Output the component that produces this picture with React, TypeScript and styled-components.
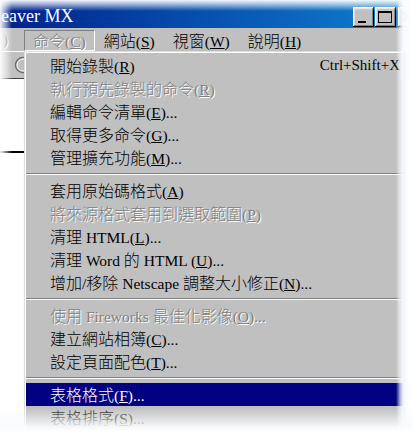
import React from "react";
import styled, { createGlobalStyle, css } from "styled-components";

const Global = createGlobalStyle`
  html, body { margin: 0; padding: 0; background: #ffffff; }
  body { font-family: "Noto Sans CJK TC", "Liberation Serif", serif; font-weight: 300; }
`;

const Stage = styled.div`
  position: relative;
  width: 412px;
  height: 432px;
  overflow: hidden;
  background: #ffffff;
`;

const Window = styled.div`
  position: relative;
  width: 422px;
  height: 432px;
  display: flex;
  flex-direction: column;
`;

const TitleBar = styled.div`
  flex: none;
  height: 28px;
  box-sizing: border-box;
  padding: 0 3px 0 1px;
  display: flex;
  align-items: flex-start;
  justify-content: space-between;
  background: linear-gradient(90deg, #00208c 0%, #1084d0 100%);
`;

const Title = styled.div`
  padding-top: 4px;
  line-height: 24px;
  font-family: "Liberation Serif", serif;
  font-weight: 400;
  font-size: 18px;
  color: #ffffff;
  white-space: nowrap;
`;

const Controls = styled.div`
  display: flex;
  margin-top: 7px;
  gap: 1px;
`;

const CtrlButton = styled.div<{ $gap?: boolean }>`
  width: 21px;
  height: 20px;
  background: #c0c0c0;
  margin-left: ${(p) => (p.$gap ? "1px" : "0")};
  box-shadow: inset -1px -1px #000000, inset 1px 1px #ffffff,
    inset -2px -2px #808080, inset 2px 2px #dfdfdf;
  svg { display: block; }
`;

const MenuBar = styled.div`
  flex: none;
  height: 24px;
  box-sizing: border-box;
  padding-top: 2px;
  display: flex;
  align-items: flex-start;
  background: #c0c0c0;
  border-bottom: 1px solid #ffffff;
`;

const MenuTail = styled.div`
  width: 24px;
  height: 21px;
  box-sizing: border-box;
  padding-left: 3px;
  display: flex;
  align-items: center;
  font-family: "Liberation Serif", serif;
  font-size: 15px;
  color: #808080;
  text-shadow: 1px 1px 0 #ffffff;
`;

const MenuBarItem = styled.div<{ $open?: boolean }>`
  height: 21px;
  box-sizing: border-box;
  padding: 0 8px;
  display: flex;
  align-items: center;
  font-size: 16px;
  line-height: 21px;
  color: #000000;
  white-space: nowrap;
  border: 1px solid transparent;
  ${(p) =>
    p.$open &&
    css`
      border-color: #808080 #ffffff #ffffff #808080;
      color: #808080;
      text-shadow: 1px 1px 0 #ffffff;
    `}
`;

const Toolbar = styled.div`
  flex: none;
  height: 27px;
  box-sizing: border-box;
  padding-left: 14px;
  display: flex;
  align-items: center;
  background: #c0c0c0;
  border-bottom: 1px solid #404040;
`;

const Document = styled.div`
  flex: 1;
  background: #ffffff;
  padding-top: 72px;
`;

const Rule = styled.div`
  width: 24px;
  height: 2px;
  background: #000000;
`;

const Dropdown = styled.div`
  position: absolute;
  left: 24px;
  top: 51px;
  width: 381px;
  box-sizing: border-box;
  padding: 2px 0 20px;
  background: #c0c0c0;
  border: 1px solid;
  border-color: #dfdfdf #000000 #000000 #dfdfdf;
  box-shadow: inset 1px 1px #ffffff, inset -1px -1px #808080,
    2px 2px 3px rgba(0, 0, 0, 0.35);
`;

type RowState = "normal" | "disabled" | "active";

const Row = styled.div<{ $state: RowState }>`
  height: 23px;
  box-sizing: border-box;
  margin: 0 1px;
  padding: 0 3px 0 24px;
  display: flex;
  align-items: center;
  justify-content: space-between;
  font-size: 16px;
  line-height: 23px;
  white-space: nowrap;
  color: #000000;
  ${(p) =>
    p.$state === "disabled" &&
    css`
      color: #808080;
      text-shadow: 1px 1px 0 #ffffff;
    `}
  ${(p) =>
    p.$state === "active" &&
    css`
      background: #000080;
      color: #ffffff;
    `}
`;

const Latin = styled.span`
  font-family: "Liberation Serif", serif;
  font-weight: 400;
  font-size: 15.5px;
`;

const Key = styled.span`
  text-decoration: underline;
  text-underline-offset: 1px;
`;

const Shortcut = styled.span`
  font-family: "Liberation Serif", serif;
  font-weight: 400;
  font-size: 15px;
`;

const Separator = styled.div`
  height: 10px;
  box-sizing: border-box;
  margin: 0 1px;
  padding-top: 4px;
  &::before {
    content: "";
    display: block;
    border-top: 1px solid #808080;
    border-bottom: 1px solid #ffffff;
  }
`;

type Edge = "top" | "left" | "right" | "bottom";

const Fade = styled.div<{ $edge: Edge }>`
  position: absolute;
  pointer-events: none;
  ${(p) =>
    p.$edge === "top" &&
    css`
      left: 0; right: 0; top: 0; height: 11px;
      background: linear-gradient(180deg, rgba(255,255,255,0.95) 0%, rgba(255,255,255,0.6) 40%, rgba(255,255,255,0) 100%);
    `}
  ${(p) =>
    p.$edge === "left" &&
    css`
      left: 0; top: 0; bottom: 0; width: 12px;
      background: linear-gradient(90deg, rgba(255,255,255,0.95) 0%, rgba(255,255,255,0.55) 45%, rgba(255,255,255,0) 100%);
    `}
  ${(p) =>
    p.$edge === "right" &&
    css`
      right: 0; top: 0; bottom: 0; width: 16px;
      background: linear-gradient(90deg, rgba(255,255,255,0) 0px, rgba(244,247,252,0.7) 4px, rgba(250,251,254,0.96) 7px, #ffffff 16px);
    `}
  ${(p) =>
    p.$edge === "bottom" &&
    css`
      left: 0; right: 0; bottom: 0; height: 24px;
      background: linear-gradient(180deg, rgba(255,255,255,0) 0%, rgba(248,250,253,0.55) 45%, rgba(250,251,254,0.95) 80%, #ffffff 100%);
    `}
`;

const CJK_RE = /([\u2e80-\u9fff\uf900-\ufaff\u3000-\u303f\uff00-\uffef]+)/;

function Runs({ text }: { text: string }) {
  const parts = text.split(CJK_RE).filter((s) => s.length > 0);
  return (
    <>
      {parts.map((part, i) =>
        CJK_RE.test(part) ? (
          <React.Fragment key={i}>{part}</React.Fragment>
        ) : (
          <Latin key={i}>{part}</Latin>
        )
      )}
    </>
  );
}

function Mnemonic({ label, k, more }: { label: string; k: string; more?: boolean }) {
  return (
    <span>
      <Runs text={label} />
      <Latin>
        (<Key>{k}</Key>){more ? "..." : ""}
      </Latin>
    </span>
  );
}

type Item = {
  label: string;
  k: string;
  more?: boolean;
  state?: RowState;
  shortcut?: string;
};

const groups: Item[][] = [
  [
    { label: "開始錄製", k: "R", shortcut: "Ctrl+Shift+X" },
    { label: "執行預先錄製的命令", k: "R", state: "disabled" },
    { label: "編輯命令清單", k: "E", more: true },
    { label: "取得更多命令", k: "G", more: true },
    { label: "管理擴充功能", k: "M", more: true },
  ],
  [
    { label: "套用原始碼格式", k: "A" },
    { label: "將來源格式套用到選取範圍", k: "P", state: "disabled" },
    { label: "清理 HTML", k: "L", more: true },
    { label: "清理 Word 的 HTML ", k: "U", more: true },
    { label: "增加/移除 Netscape 調整大小修正", k: "N", more: true },
  ],
  [
    { label: "使用 Fireworks 最佳化影像", k: "O", more: true, state: "disabled" },
    { label: "建立網站相簿", k: "C", more: true },
    { label: "設定頁面配色", k: "T", more: true },
  ],
  [
    { label: "表格格式", k: "F", more: true, state: "active" },
    { label: "表格排序", k: "S", more: true },
  ],
];

const menus: { label: string; k: string }[] = [
  { label: "網站", k: "S" },
  { label: "視窗", k: "W" },
  { label: "說明", k: "H" },
];

export default function App() {
  return (
    <Stage>
      <Global />
      <Window>
        <TitleBar>
          <Title>eaver MX</Title>
          <Controls>
            <CtrlButton>
              <svg width="21" height="20" viewBox="0 0 21 20">
                <rect x="5" y="14" width="8" height="2" fill="#000" />
              </svg>
            </CtrlButton>
            <CtrlButton>
              <svg width="21" height="20" viewBox="0 0 21 20">
                <rect x="3.5" y="4.5" width="13" height="11" fill="none" stroke="#000" />
                <rect x="3" y="4" width="14" height="2" fill="#000" />
              </svg>
            </CtrlButton>
            <CtrlButton $gap>
              <svg width="21" height="20" viewBox="0 0 21 20">
                <path d="M5 5 L14 14 M14 5 L5 14" stroke="#000" strokeWidth="2" />
              </svg>
            </CtrlButton>
          </Controls>
        </TitleBar>

        <MenuBar>
          <MenuTail>)</MenuTail>
          <MenuBarItem $open>
            <Mnemonic label="命令" k="C" />
          </MenuBarItem>
          {menus.map((m) => (
            <MenuBarItem key={m.k}>
              <Mnemonic label={m.label} k={m.k} />
            </MenuBarItem>
          ))}
        </MenuBar>

        <Toolbar>
          <svg width="18" height="18" viewBox="0 0 18 18">
            <circle cx="9" cy="9" r="7.5" fill="none" stroke="#6b6b6b" strokeWidth="1.5" />
            <circle cx="9" cy="9" r="6" fill="none" stroke="#ffffff" strokeWidth="1" />
          </svg>
        </Toolbar>

        <Document>
          <Rule />
        </Document>

        <Dropdown>
          {groups.map((group, gi) => (
            <React.Fragment key={gi}>
              {gi > 0 && <Separator />}
              {group.map((item) => (
                <Row key={item.label} $state={item.state ?? "normal"}>
                  <Mnemonic label={item.label} k={item.k} more={item.more} />
                  {item.shortcut && <Shortcut>{item.shortcut}</Shortcut>}
                </Row>
              ))}
            </React.Fragment>
          ))}
        </Dropdown>
      </Window>
      <Fade $edge="top" />
      <Fade $edge="left" />
      <Fade $edge="right" />
      <Fade $edge="bottom" />
    </Stage>
  );
}
